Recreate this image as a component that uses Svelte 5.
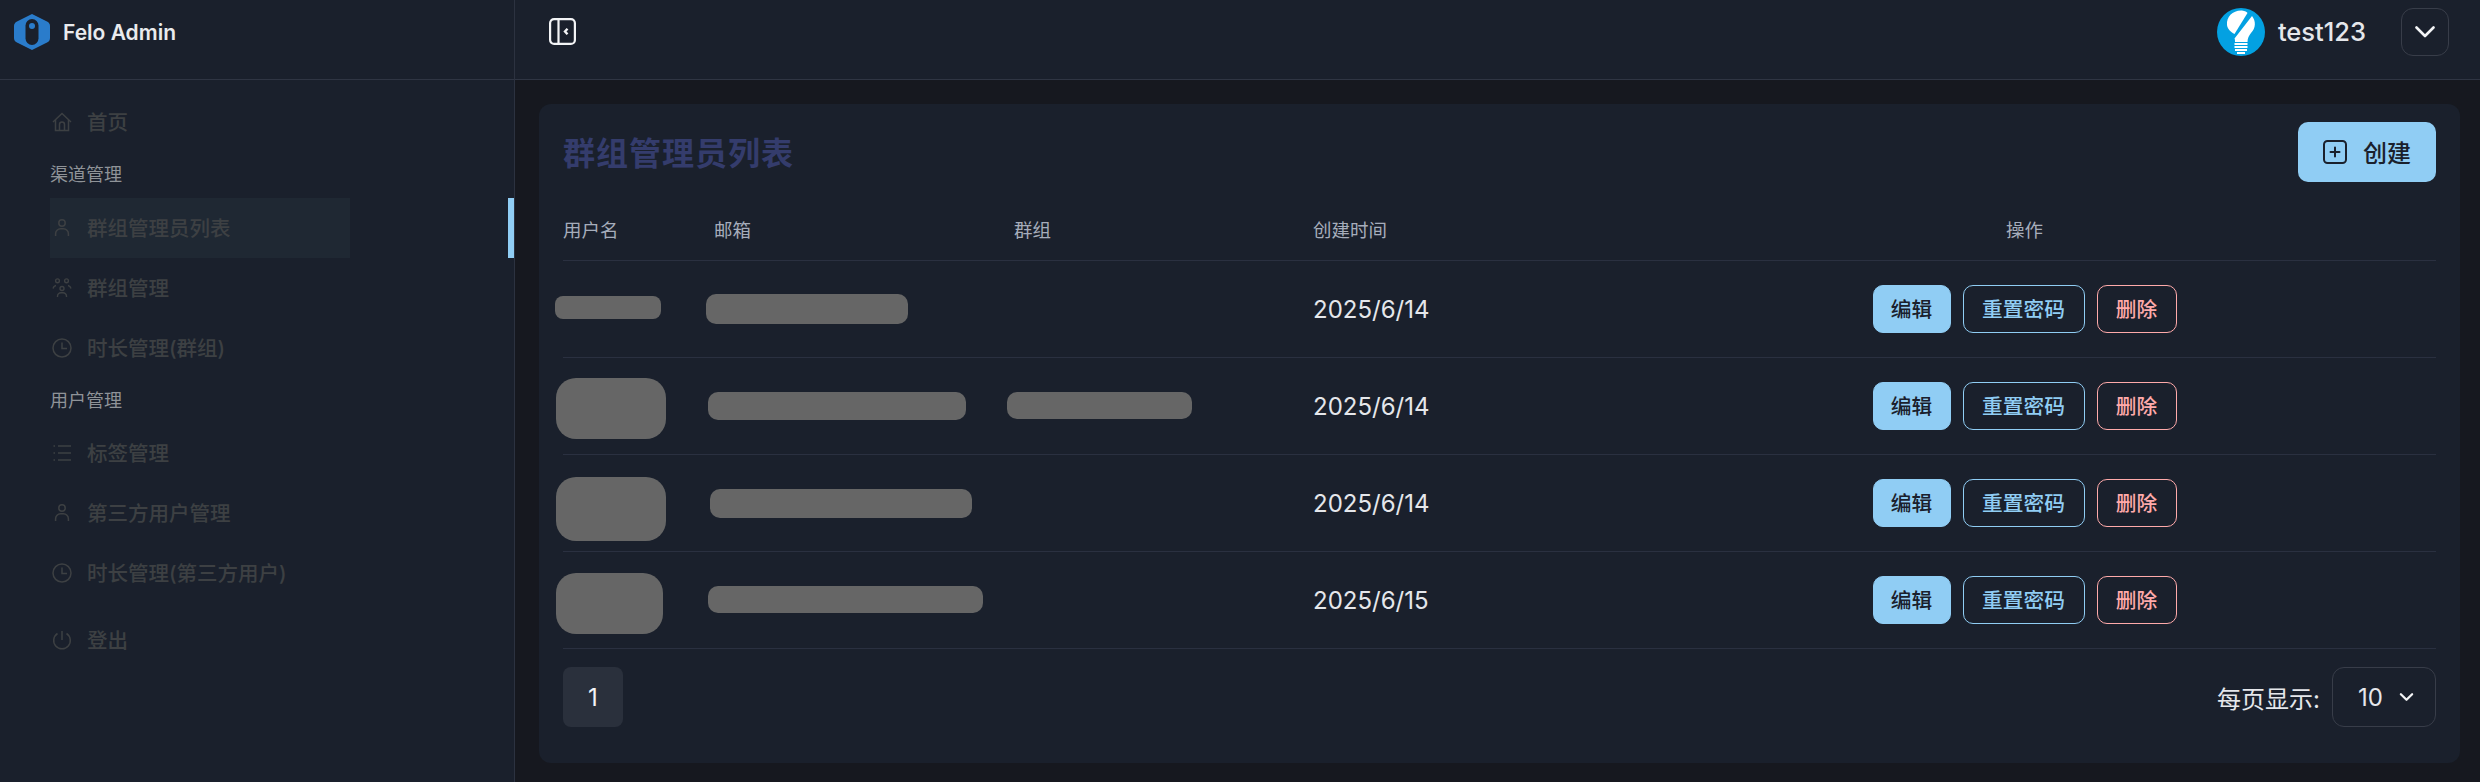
<script>
	const rows = [
		{ date: '2025/6/14', blocks: [
			{ x: -8, y: 35, w: 106, h: 23, r: 8 },
			{ x: 143, y: 33, w: 202, h: 30, r: 10 }
		] },
		{ date: '2025/6/14', blocks: [
			{ x: -7, y: 20, w: 110, h: 61, r: 20 },
			{ x: 145, y: 34, w: 258, h: 28, r: 10 },
			{ x: 444, y: 34, w: 185, h: 27, r: 10 }
		] },
		{ date: '2025/6/14', blocks: [
			{ x: -7, y: 22, w: 110, h: 64, r: 20 },
			{ x: 147, y: 34, w: 262, h: 29, r: 10 }
		] },
		{ date: '2025/6/15', blocks: [
			{ x: -7, y: 21, w: 107, h: 61, r: 20 },
			{ x: 145, y: 34, w: 275, h: 27, r: 10 }
		] }
	];
</script>

{#snippet userIcon()}
	<svg class="nav-icon" viewBox="0 0 20 20" fill="none" stroke="currentColor" stroke-width="1.5">
		<circle cx="10" cy="5" r="3.2" />
		<path d="M3.6 18v-2.2a5 5 0 0 1 5-5h2.8a5 5 0 0 1 5 5V18" />
	</svg>
{/snippet}

{#snippet clockIcon()}
	<svg class="nav-icon" viewBox="0 0 20 20" fill="none" stroke="currentColor" stroke-width="1.5">
		<circle cx="10" cy="10" r="9" />
		<path d="M10 4.5V10.5H15" />
	</svg>
{/snippet}

<div class="root">
	<aside class="side">
		<div class="brand">
			<svg class="logo" viewBox="0 0 36 36">
				<path d="M18 0 L33 7.5 Q36 9 36 12 V24 Q36 27 33 28.5 L18 36 L3 28.5 Q0 27 0 24 V12 Q0 9 3 7.5 Z" fill="#2a7ccb" />
				<rect x="11.5" y="5" width="13" height="26" rx="6.5" fill="#1a202c" />
				<circle cx="18" cy="12" r="3" fill="#2a7ccb" />
			</svg>
			<span>Felo Admin</span>
		</div>
		<nav class="nav">
			<a class="item">
				<svg class="nav-icon" viewBox="0 0 20 20" fill="none" stroke="currentColor" stroke-width="1.5">
					<path d="M1 10 L10 1.5 L19 10" />
					<path d="M3.5 8V18.5H16.5V8" />
					<path d="M7.5 18.5V12.5a2.5 2.5 0 0 1 5 0V18.5" />
				</svg>
				首页
			</a>
			<div class="section">渠道管理</div>
			<a class="item active">{@render userIcon()}群组管理员列表</a>
			<a class="item">
				<svg class="nav-icon" viewBox="0 0 20 20" fill="none" stroke="currentColor" stroke-width="1.4">
					<circle cx="5.5" cy="2.8" r="1.9" />
					<circle cx="14.5" cy="2.8" r="1.9" />
					<circle cx="10" cy="10.5" r="2" />
					<path d="M1 10.5a4 4 0 0 1 3-3" />
					<path d="M19 10.5a4 4 0 0 0-3-3" />
					<path d="M5.5 19v-.8a3.5 3.5 0 0 1 3.5-3.5h2a3.5 3.5 0 0 1 3.5 3.5v.8" />
				</svg>
				群组管理
			</a>
			<a class="item">{@render clockIcon()}时长管理(群组)</a>
			<div class="section second">用户管理</div>
			<a class="item">
				<svg class="nav-icon" viewBox="0 0 20 20" fill="none" stroke="currentColor" stroke-width="1.5">
					<path d="M6 3H19M6 10H19M6 17H19" />
					<path d="M1.5 3H3M1.5 10H3M1.5 17H3" />
				</svg>
				标签管理
			</a>
			<a class="item">{@render userIcon()}第三方用户管理</a>
			<a class="item">{@render clockIcon()}时长管理(第三方用户)</a>
			<a class="item logout">
				<svg class="nav-icon" viewBox="0 0 20 20" fill="none" stroke="currentColor" stroke-width="1.5">
					<path d="M10 1V10" />
					<path d="M5.5 3.5a8.3 8.3 0 1 0 9 0" />
				</svg>
				登出
			</a>
		</nav>
		<span class="marker"></span>
	</aside>

	<div class="body">
		<header class="top">
			<button class="collapse" aria-label="collapse">
				<svg viewBox="0 0 27 27" width="27" height="27" fill="none" stroke="#f3f4f6" stroke-width="2.2">
					<rect x="1.1" y="1.1" width="24.8" height="24.8" rx="4" />
					<path d="M9.5 1.1V25.9" />
					<path d="M18.5 10.8 L16 13.5 L18.5 16.2" stroke-width="2.4" />
				</svg>
			</button>
			<div class="user">
				<svg class="avatar" viewBox="0 0 48 48">
					<circle cx="24" cy="24" r="24" fill="#03a1e2" />
					<path d="M10 17C9 9 16 2 25 2.5C28 2.8 30 4 30.5 5L17.5 26C13.5 24 10.5 21 10 17Z" fill="#fff" />
					<path d="M35 8C39 13 39 20 34 25C32 27.5 30.5 30 30.5 34H18C18 32.5 18 31.5 17.5 30.5Z" fill="#fff" />
					<path d="M17.5 36H30.5M17.5 39H30.5M18 42H30M20 45H28" stroke="#fff" stroke-width="2" />
				</svg>
				<span class="name">test123</span>
				<button class="menu" aria-label="menu">
					<svg viewBox="0 0 20 12" width="20" height="12" fill="none" stroke="#f3f4f6" stroke-width="2.6" stroke-linecap="round" stroke-linejoin="round">
						<path d="M1.5 1.5 L10 10 L18.5 1.5" />
					</svg>
				</button>
			</div>
		</header>

		<main class="main">
			<section class="card">
				<div class="title-row">
					<h1>群组管理员列表</h1>
					<button class="create">
						<svg viewBox="0 0 24 24" width="24" height="24" fill="none" stroke="#1a202c" stroke-width="2">
							<rect x="1" y="1" width="22" height="22" rx="3.5" />
							<path d="M12 7.5V16.5M7.5 12H16.5" stroke-linecap="round" />
						</svg>
						<span class="create-label">创建</span>
					</button>
				</div>

				<div class="grid head">
					<div>用户名</div>
					<div>邮箱</div>
					<div>群组</div>
					<div>创建时间</div>
					<div class="center">操作</div>
				</div>

				{#each rows as row}
					<div class="grid row">
						<div></div>
						<div></div>
						<div></div>
						<div class="date">{row.date}</div>
						<div class="actions">
							<button class="btn edit">编辑</button>
							<button class="btn reset">重置密码</button>
							<button class="btn del">删除</button>
						</div>
						{#each row.blocks as b}
							<span class="blur" style="left: {b.x}px; top: {b.y}px; width: {b.w}px; height: {b.h}px; border-radius: {b.r}px;"></span>
						{/each}
					</div>
				{/each}

				<div class="foot">
					<button class="page">1</button>
					<div class="per">
						<span>每页显示:</span>
						<div class="select">
							10
							<svg viewBox="0 0 16 10" width="15" height="10" fill="none" stroke="#f3f4f6" stroke-width="2.4" stroke-linecap="round" stroke-linejoin="round">
								<path d="M2 2 L8 8 L14 2" />
							</svg>
						</div>
					</div>
				</div>
			</section>
		</main>
	</div>
</div>

<style>
	:global(body) {
		margin: 0;
		background: #16181f;
	}
	.root {
		display: flex;
		width: 2480px;
		height: 782px;
		overflow: hidden;
		background: #16181f;
		color: #e5e7eb;
		font-family: Inter, "Noto Sans CJK SC", sans-serif;
	}
	button {
		font-family: inherit;
		cursor: pointer;
		padding: 0;
	}
	.side {
		position: relative;
		width: 514px;
		flex-shrink: 0;
		background: #1a202c;
		border-right: 1px solid #2c3240;
	}
	.brand {
		display: flex;
		align-items: center;
		gap: 13px;
		height: 80px;
		padding: 0 0 15px 14px;
		box-sizing: border-box;
		border-bottom: 1px solid #2f3543;
		font-size: 21px;
		font-weight: 600;
		color: #e9ebee;
	}
	.logo {
		width: 36px;
		height: 36px;
	}
	.nav {
		display: flex;
		flex-direction: column;
		padding: 12px 0 0 50px;
		width: 300px;
	}
	.item {
		display: flex;
		align-items: center;
		gap: 15px;
		height: 60px;
		box-sizing: border-box;
		padding: 0 0 2px 2px;
		font-size: 20.5px;
		font-weight: 500;
		color: #3d4043;
		white-space: nowrap;
	}
	.item.active {
		background: #1f2833;
	}
	.item.logout {
		margin-top: 7px;
	}
	.nav-icon {
		width: 20px;
		height: 20px;
		flex-shrink: 0;
		margin-top: 2px;
	}
	.section {
		font-size: 18px;
		line-height: 26px;
		height: 26px;
		margin: 10px 0 10px;
		color: #8f9398;
	}
	.section.second {
		margin-bottom: 9px;
	}
	.marker {
		position: absolute;
		right: 0;
		top: 198px;
		width: 6px;
		height: 60px;
		background: #90cdf4;
	}
	.body {
		flex: 1;
		display: flex;
		flex-direction: column;
		min-width: 0;
	}
	.top {
		display: flex;
		align-items: center;
		justify-content: space-between;
		height: 80px;
		box-sizing: border-box;
		padding: 0 31px 16px 34px;
		background: #1a202c;
		border-bottom: 1px solid #2f3543;
	}
	.collapse {
		display: flex;
		background: none;
		border: 0;
	}
	.user {
		display: flex;
		align-items: center;
	}
	.avatar {
		width: 48px;
		height: 48px;
	}
	.name {
		margin: 0 35px 0 13px;
		font-size: 25.5px;
		font-weight: 500;
		color: #e5e7eb;
	}
	.menu {
		display: flex;
		align-items: center;
		justify-content: center;
		width: 48px;
		height: 48px;
		background: none;
		border: 1px solid #383d49;
		border-radius: 12px;
	}
	.main {
		flex: 1;
		padding: 24px 20px 19px 24px;
		min-height: 0;
	}
	.card {
		height: 100%;
		box-sizing: border-box;
		padding: 18px 24px 0;
		background: #1a202c;
		border-radius: 12px;
	}
	.title-row {
		display: flex;
		align-items: center;
		justify-content: space-between;
		height: 60px;
	}
	h1 {
		margin: 0 0 2px;
		font-size: 32px;
		font-weight: 600;
		letter-spacing: 1px;
		color: #343c6c;
	}
	.create {
		display: flex;
		align-items: center;
		justify-content: center;
		gap: 16px;
		width: 138px;
		height: 60px;
		background: #90cdf4;
		border: 0;
		border-radius: 10px;
		font-size: 24px;
		font-weight: 500;
		color: #1a202c;
	}
	.create-label {
		margin-bottom: 2px;
	}
	.grid {
		display: grid;
		grid-template-columns: 151px 300px 299px 300px 1fr;
		align-items: center;
		border-bottom: 1px solid #2a3040;
		box-sizing: border-box;
	}
	.head {
		height: 79px;
		padding-top: 35px;
		font-size: 18.5px;
		line-height: 26px;
		color: #a6adbb;
		align-items: start;
	}
	.center {
		text-align: center;
	}
	.row {
		position: relative;
		height: 97px;
	}
	.date {
		font-size: 24px;
		color: #e5e7eb;
	}
	.actions {
		display: flex;
		justify-content: center;
		gap: 12px;
	}
	.btn {
		height: 48px;
		box-sizing: border-box;
		padding-bottom: 2px;
		font-size: 20.7px;
		font-weight: 500;
		border-radius: 10px;
		background: none;
	}
	.edit {
		width: 78px;
		background: #90cdf4;
		border: 1px solid #90cdf4;
		color: #1a202c;
	}
	.reset {
		width: 122px;
		border: 1px solid #90cdf4;
		color: #90cdf4;
	}
	.del {
		width: 80px;
		border: 1px solid #ffaaaa;
		color: #ffaaaa;
	}
	.blur {
		position: absolute;
		background: #666;
	}
	.foot {
		display: flex;
		align-items: center;
		justify-content: space-between;
		padding-top: 18px;
	}
	.page {
		width: 60px;
		height: 60px;
		background: #2a303c;
		border: 0;
		border-radius: 8px;
		font-size: 24px;
		color: #f3f4f6;
	}
	.per {
		display: flex;
		align-items: center;
		gap: 12px;
		font-size: 24px;
		color: #e5e7eb;
	}
	.select {
		display: flex;
		align-items: center;
		gap: 16px;
		width: 104px;
		height: 60px;
		box-sizing: border-box;
		padding-left: 25px;
		border: 1px solid #383d49;
		border-radius: 12px;
		font-size: 24px;
	}
</style>
